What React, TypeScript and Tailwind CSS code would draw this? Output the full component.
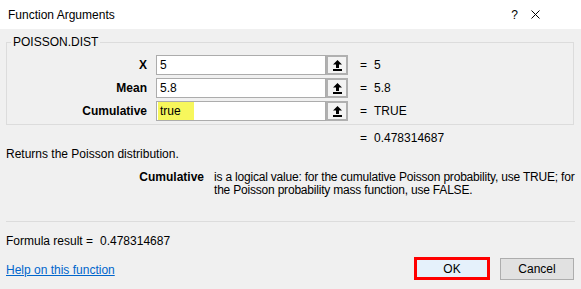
import React from 'react'

const args = [
  { label: 'X', value: '5', result: '5' },
  { label: 'Mean', value: '5.8', result: '5.8' },
  { label: 'Cumulative', value: 'true', result: 'TRUE', highlight: true },
]

function RefArrow() {
  return (
    <svg width="9" height="11" viewBox="0 0 9 11">
      <path d="M4.5 0 L9 4.5 L6 4.5 L6 8 L3 8 L3 4.5 L0 4.5 Z" fill="#000" />
      <rect x="0" y="9" width="9" height="2" fill="#000" />
    </svg>
  )
}

export default function App() {
  return (
    <div className="w-[581px] h-[289px] overflow-hidden bg-[#f0f0f0] text-black text-[12px] leading-[14px] font-['Liberation_Sans',Arial,sans-serif] flex flex-col">
      {/* Title bar */}
      <div className="h-[29px] bg-white flex items-center pl-[8px] pr-[41px] shrink-0">
        <span className="flex-1 text-[12px]">Function Arguments</span>
        <span className="text-[12px] mr-[13px]">?</span>
        <svg width="9" height="9" viewBox="0 0 9 9">
          <path d="M0.5 0.5 L8.5 8.5 M8.5 0.5 L0.5 8.5" stroke="#000" strokeWidth="1" />
        </svg>
      </div>

      <div className="px-[6px] flex flex-col">
        {/* Group box */}
        <fieldset className="mt-[6px] border border-[#dcdcdc] px-0 pt-[6px] pb-[3px] w-[568px]">
          <legend className="ml-[4px] px-[2px] leading-[14px]">POISSON.DIST</legend>
          <div className="flex flex-col gap-[3px]">
            {args.map((a) => (
              <div key={a.label} className="flex items-center h-[20px]">
                <div className="w-[140px] shrink-0 text-right font-bold">{a.label}</div>
                <div className="ml-[9px] w-[170px] h-[20px] bg-white border border-[#acacac] flex items-center px-[1px]">
                  <span className={`h-full flex items-center px-[2px] ${a.highlight ? 'bg-[#f7f75c] pr-[13px]' : ''}`}>
                    {a.value}
                  </span>
                </div>
                <div className="w-[22px] h-[20px] border-2 border-[#b0b0b0] bg-[#f3f3f3] flex items-center justify-center">
                  <RefArrow />
                </div>
                <span className="ml-[12px] w-[14px]">=</span>
                <span>{a.result}</span>
              </div>
            ))}
          </div>
        </fieldset>

        {/* Result */}
        <div className="flex h-[14px] mt-[6px]">
          <span className="ml-[354px] w-[14px]">=</span>
          <span>0.478314687</span>
        </div>

        <div className="mt-[2px] h-[14px]">Returns the Poisson distribution.</div>

        <div className="flex mt-[10px] leading-[13px]">
          <div className="w-[198px] shrink-0 text-right font-bold">Cumulative</div>
          <div className="ml-[10px] whitespace-nowrap tracking-[-0.2px]">
            <div>is a logical value: for the cumulative Poisson probability, use TRUE; for</div>
            <div>the Poisson probability mass function, use FALSE.</div>
          </div>
        </div>

        <div className="mt-[24px] h-px bg-[#dcdcdc] w-[569px]" />

        <div className="flex mt-[12px] h-[14px]">
          <span className="w-[94px]">Formula result =</span>
          <span>0.478314687</span>
        </div>

        <div className="flex items-center mt-[9px] h-[23px]">
          <a href="#" className="flex-1 text-[#0066cc] underline mt-[3px]">Help on this function</a>
          <button className="w-[76px] h-[23px] border-[3px] border-[#ff0000] bg-[#e5f1fb]">OK</button>
          <button className="ml-[10px] mr-[1px] w-[74px] h-[22px] border border-[#adadad] bg-[#e1e1e1]">Cancel</button>
        </div>
      </div>
    </div>
  )
}
